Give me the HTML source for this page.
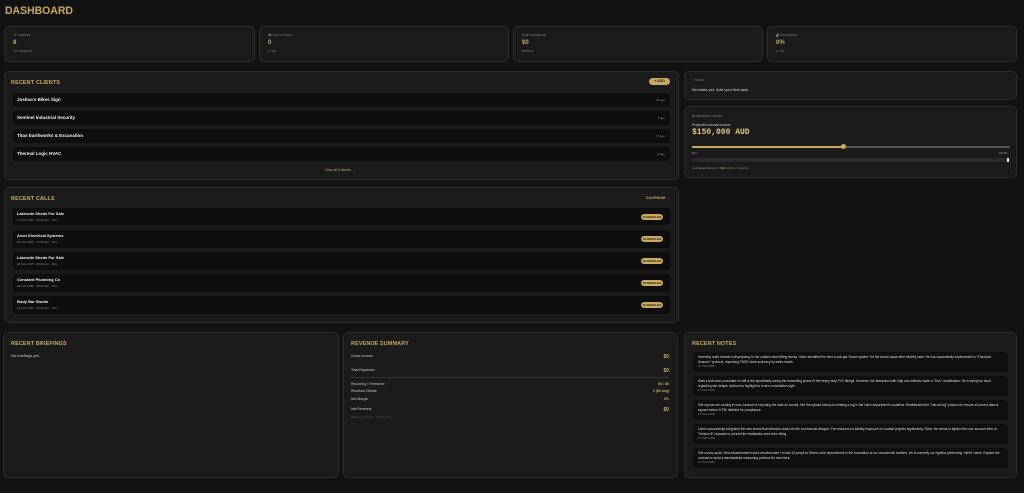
<!DOCTYPE html>
<html><head><meta charset="utf-8"><style>
*{box-sizing:border-box;margin:0;padding:0}
body{width:1024px;height:493px;background:#121212;font-family:"Liberation Sans",sans-serif;color:#ddd;position:relative;overflow:hidden}
.a{position:absolute}
.card{position:absolute;background:#1b1b1b;border:1px solid #2c2c2c;border-radius:5px}
.gold{color:#c9a862}
.h{font-size:5.5px;font-weight:bold;letter-spacing:.1px;color:#c9a862}
.row{position:absolute;background:#0e0e0e;border-radius:3px}
.tiny{font-size:3px;color:#888}
.nm{font-size:4.5px;font-weight:bold;color:#f0f0f0}
.pill{position:absolute;background:#c9a862;border-radius:4px;width:22px;height:6px;right:7px;top:6px;font-size:3px;color:#222;text-align:center;line-height:6px;font-weight:bold}
.note{position:absolute;left:8px;right:8px;height:20px;background:#0f0f0f;border-radius:3px;font-size:3.2px;color:#ddd;padding:3px 5px;line-height:4.5px;overflow:hidden}
.sv{position:absolute;left:0;right:0;font-size:3.5px;color:#ccc}
.sv b{position:absolute;right:0;color:#c9a862;font-size:5px}
</style></head><body>
<div class="a gold" style="left:5px;top:5px;font-size:11px;font-weight:900;letter-spacing:0;transform:scaleX(.95);transform-origin:left">DASHBOARD</div>

<div class="card" style="left:4px;top:26px;width:251px;height:36px"><div class="a tiny" style="left:8px;top:6px">☏ CLIENTS</div><div class="a gold" style="left:8px;top:13px;font-size:6px;font-weight:bold">8</div><div class="a tiny" style="left:8px;top:22px">TO CONTACT</div></div>
<div class="card" style="left:259px;top:26px;width:250px;height:36px"><div class="a tiny" style="left:8px;top:6px">☎ CALLS TODAY</div><div class="a gold" style="left:8px;top:13px;font-size:6px;font-weight:bold">0</div><div class="a tiny" style="left:8px;top:22px">0 / 48</div></div>
<div class="card" style="left:513px;top:26px;width:250px;height:36px"><div class="a tiny" style="left:8px;top:6px">$ NET REVENUE</div><div class="a gold" style="left:8px;top:13px;font-size:6px;font-weight:bold">$0</div><div class="a tiny" style="left:8px;top:22px">MONTH</div></div>
<div class="card" style="left:767px;top:26px;width:250px;height:36px"><div class="a tiny" style="left:8px;top:6px">▟ UTILISATION</div><div class="a gold" style="left:8px;top:13px;font-size:6px;font-weight:bold">0%</div><div class="a tiny" style="left:8px;top:22px">0 / 40</div></div>

<div class="card" style="left:4px;top:71px;width:675px;height:109px">
<div class="a h" style="left:6px;top:8px">RECENT CLIENTS</div>
<div class="a" style="right:8px;top:6px;width:21px;height:7px;background:#c9a862;border-radius:4px;font-size:3.5px;color:#222;text-align:center;line-height:7px;font-weight:bold">+ ADD</div>
<div class="row" style="left:8px;right:8px;top:21px;height:14px"><div class="a nm" style="left:4px;top:4px">Joshua's Bikes Sign</div><div class="a tiny" style="right:5px;top:5px">78 ago</div></div>
<div class="row" style="left:8px;right:8px;top:39px;height:14px"><div class="a nm" style="left:4px;top:4px">Sentinel Industrial Security</div><div class="a tiny" style="right:5px;top:5px">1 ago</div></div>
<div class="row" style="left:8px;right:8px;top:57px;height:14px"><div class="a nm" style="left:4px;top:4px">Titan Earthworks &amp; Excavation</div><div class="a tiny" style="right:5px;top:5px">77 ago</div></div>
<div class="row" style="left:8px;right:8px;top:75px;height:14px"><div class="a nm" style="left:4px;top:4px">Thermal Logic HVAC</div><div class="a tiny" style="right:5px;top:5px">0 ago</div></div>
<div class="a" style="left:320px;top:96px;font-size:3.5px;color:#c9a862">View all 4 clients →</div>
</div>

<div class="card" style="left:684px;top:71px;width:333px;height:29px"><div class="a tiny" style="left:7px;top:6px">○ TASKS</div><div class="a" style="left:7px;top:15px;font-size:4px;color:#ddd">No tasks yet. Add your first task.</div></div>
<div class="card" style="left:684px;top:106px;width:333px;height:72px">
<div class="a tiny" style="left:7px;top:7px">◉ REVENUE TARGET</div>
<div class="a" style="left:7px;top:16px;font-size:3.5px;color:#ccc">Projected annual income</div>
<div class="a" style="left:7px;top:21px;font-size:8px;font-weight:bold;color:#e0c48a;font-family:'Liberation Mono',monospace">$150,000 AUD</div>
<div class="a" style="left:7px;top:39px;width:318px;height:2px;background:#555;border-radius:1px"></div>
<div class="a" style="left:7px;top:39px;width:151px;height:2px;background:#c9a862"></div>
<div class="a" style="left:156px;top:37px;width:5px;height:5px;border-radius:50%;background:#c9a862"></div>
<div class="a tiny" style="left:7px;top:44px">$0K</div><div class="a tiny" style="left:314px;top:44px">$300K</div>
<div class="a" style="left:7px;top:51px;width:318px;height:4px;background:#2a2a2a;border-radius:2px"></div>
<div class="a" style="left:322px;top:51px;width:2px;height:4px;background:#eee"></div>
<div class="a tiny" style="left:7px;top:59px">Calculated based on <span class="gold">$0/h</span> profit of meeting</div>
</div>

<div class="card" style="left:4px;top:187px;width:675px;height:136px">
<div class="a h" style="left:6px;top:8px">RECENT CALLS</div>
<div class="a gold" style="right:8px;top:8px;font-size:3.5px;font-weight:bold">CALENDAR →</div>
<div class="row" style="left:8px;right:8px;top:20px;height:17px"><div class="a nm" style="left:4px;top:3px;font-size:4px">Lakeside Sheds For Sale</div><div class="a tiny" style="left:4px;top:10px">17 Feb 2025 · 09:00 am · 15m</div><div class="pill">SCHEDULED</div></div>
<div class="row" style="left:8px;right:8px;top:42px;height:18px"><div class="a nm" style="left:4px;top:3px;font-size:4px">Aeon Electrical Systems</div><div class="a tiny" style="left:4px;top:10px">20 Feb 2025 · 10:00 am · 15m</div><div class="pill">SCHEDULED</div></div>
<div class="row" style="left:8px;right:8px;top:64px;height:18px"><div class="a nm" style="left:4px;top:3px;font-size:4px">Lakeside Sheds For Sale</div><div class="a tiny" style="left:4px;top:10px">04 Feb 2025 · 09:00 am · 15m</div><div class="pill">SCHEDULED</div></div>
<div class="row" style="left:8px;right:8px;top:86px;height:18px"><div class="a nm" style="left:4px;top:3px;font-size:4px">Constant Plumbing Co</div><div class="a tiny" style="left:4px;top:10px">04 Feb 2025 · 09:00 am · 15m</div><div class="pill">SCHEDULED</div></div>
<div class="row" style="left:8px;right:8px;top:108px;height:18px"><div class="a nm" style="left:4px;top:3px;font-size:4px">Body Bar Studio</div><div class="a tiny" style="left:4px;top:10px">10 Feb 2025 · 09:00 am · 15m</div><div class="pill">SCHEDULED</div></div>
</div>

<div class="card" style="left:3px;top:332px;width:336px;height:146px"><div class="a h" style="left:7px;top:8px">RECENT BRIEFINGS</div><div class="a" style="left:7px;top:20px;font-size:4px;color:#ccc">No briefings yet.</div></div>

<div class="card" style="left:343px;top:332px;width:335px;height:146px"><div class="a h" style="left:7px;top:8px">REVENUE SUMMARY</div>
<div class="a" style="left:7px;right:8px;top:0">
<div class="sv" style="top:21px">Gross Income<b>$0</b></div>
<div class="sv" style="top:35px">Total Expenses<b>$0</b></div>
<div class="a" style="left:0;right:0;top:44px;height:1px;background:#333"></div>
<div class="sv" style="top:49px">Recurring / Freelance<b style="font-size:3.5px">$0 / $0</b></div>
<div class="sv" style="top:56px">Revenue Clients<b style="font-size:3.5px">0 ($0 avg)</b></div>
<div class="sv" style="top:64px">Net Margin<b style="font-size:3.5px">0%</b></div>
<div class="sv" style="top:74px">Net Revenue<b>$0</b></div>
<div class="a tiny" style="left:0;top:82px;color:#555">Based on all time, data not live</div>
</div></div>

<div class="card" style="left:684px;top:332px;width:333px;height:146px"><div class="a h" style="left:7px;top:8px">RECENT NOTES</div>
<div class="note" style="top:19px">Inventory audit reveals a discrepancy in the outdoor steel fitting stocks. Victor identified the bent a sub-par "brace system" for the brand cause after healthy uses. He has successfully implemented a "Checkout Scanner" protocol, improving TBOE stock accuracy by week-month.<br><span class="tiny">17 Feb 2025</span></div>
<div class="note" style="top:43px">Mark's technical consultant on site is the specifically during the harvesting phase of the heavy duty PVC fittings. However, his interaction with high and districts made a "Zion" modification. He is being too blunt regarding site delays. Advised to highlight to a new consultation style.<br><span class="tiny">17 Feb 2025</span></div>
<div class="note" style="top:67px">Site reports are coming in now. Jackson is reporting the data on county. See the upload history is creating a log in the Lab's department's workflow. Recalibrated the "Lab-ed log" protocol to ensure all survey data is synced before 9 PM, labelled for compliance.<br><span class="tiny">17 Feb 2025</span></div>
<div class="note" style="top:91px">Lidem successfully integrated the new smart lead detection data into the commercial designs. The reduced our liability exposure on coastal projects significantly. Sixta: He needs to tighten the user account fees on "Version 8" requests to prevent the installation crew from idling.<br><span class="tiny">17 Feb 2025</span></div>
<div class="note" style="top:115px">Site survey audit. Desi measurement errors resulted were I to last 10 jumps to Olivers stick dependence in the foundation of our commercial builders. He is currently our highest-performing "client" name. Explore the contract to build a standardised measuring protocol for new hires.<br><span class="tiny">17 Feb 2025</span></div>
</div>
</body></html>
